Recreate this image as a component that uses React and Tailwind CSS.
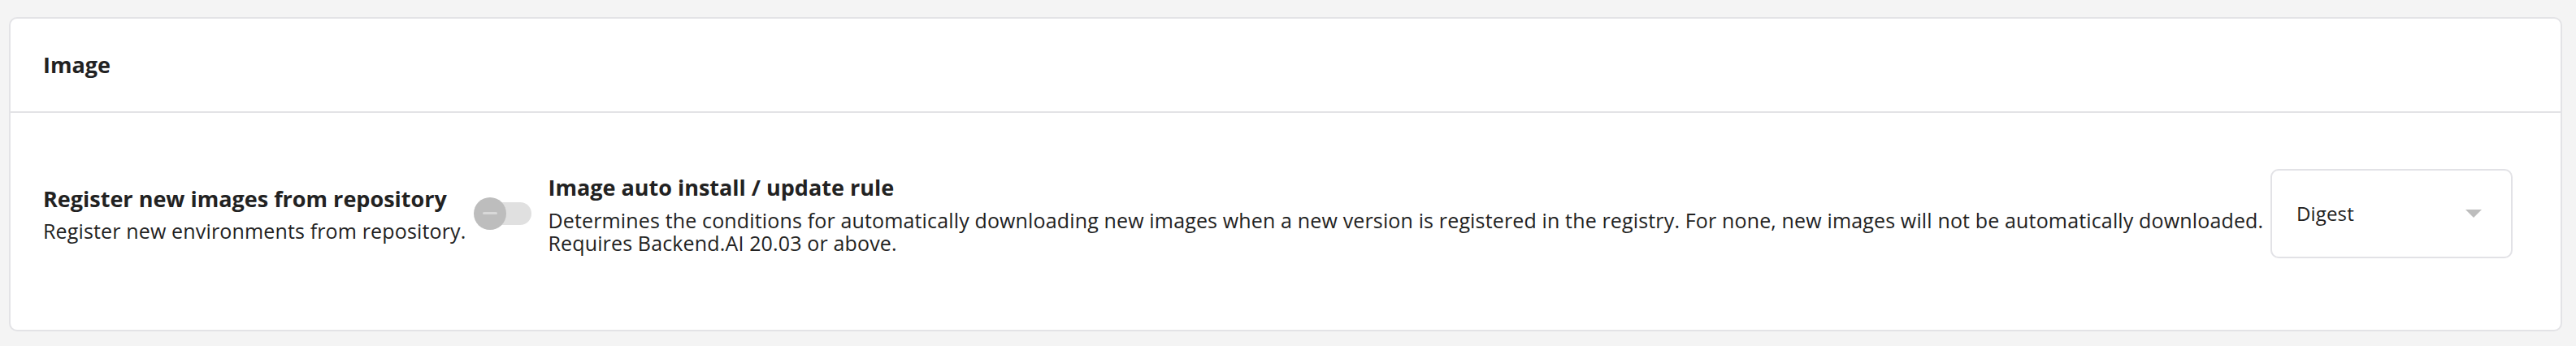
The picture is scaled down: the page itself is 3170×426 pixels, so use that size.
import React from "react";

function Toggle() {
  return (
    <div className="relative w-[71px] h-[40px] shrink-0">
      <div className="absolute left-[16px] right-0 top-[6px] h-[28px] rounded-full bg-[#e0e0e0]" />
      <div className="absolute left-0 top-0 w-[40px] h-[40px] rounded-full bg-[#bdbdbd] flex items-center justify-center">
        <div className="w-[18px] h-[3px] rounded-full bg-[#d9d9d9]" />
      </div>
    </div>
  );
}

function Select() {
  return (
    <div className="shrink-0 w-[298px] h-[110px] rounded-[10px] border-2 border-[#e2e2e6] flex items-center justify-between pl-[30px] pr-[36px]">
      <span className="text-[24px] leading-[28px] text-[#222] tracking-[0.15px]">Digest</span>
      <svg width="20" height="10" viewBox="0 0 20 10">
        <path d="M0 0 L20 0 L10 10 Z" fill="#bdbdbd" />
      </svg>
    </div>
  );
}

export default function App() {
  return (
    <div
      className="w-[3170px] h-[426px] bg-[#f4f4f4] pl-[11px] pr-[17px] pt-[21px] pb-[18px] text-[#222]"
      style={{ fontFamily: '"Open Sans", sans-serif' }}
    >
      <div className="h-full bg-white border-2 border-[#e3e3e6] rounded-[10px] flex flex-col">
        {/* Header */}
        <div className="h-[116px] shrink-0 flex items-center pl-[40px] border-b-2 border-[#e3e3e6]">
          <h3 className="text-[27px] font-bold leading-[36px]">Image</h3>
        </div>

        {/* Body */}
        <div className="flex-1 flex items-center pl-[40px] pr-[59px] pb-[20px]">
          <div className="flex flex-col shrink-0">
            <div className="text-[27px] font-bold leading-[36px]">Register new images from repository</div>
            <div className="text-[25px] leading-[28px] tracking-[0.15px] mt-[7px]">Register new environments from repository.</div>
          </div>

          <div className="ml-[10px] mr-[20px]">
            <Toggle />
          </div>

          <div className="flex-1 flex flex-col min-w-0">
            <div className="text-[27px] font-bold leading-[36px]">Image auto install / update rule</div>
            <div className="text-[25px] leading-[28px] tracking-[0.15px] mt-[8px]">
              <span className="block whitespace-nowrap">
                Determines the conditions for automatically downloading new images when a new version is registered in the registry. For none, new images will not be automatically downloaded.
              </span>
              <span className="block">Requires Backend.AI 20.03 or above.</span>
            </div>
          </div>

          <div className="ml-[11px]">
            <Select />
          </div>
        </div>
      </div>
    </div>
  );
}
